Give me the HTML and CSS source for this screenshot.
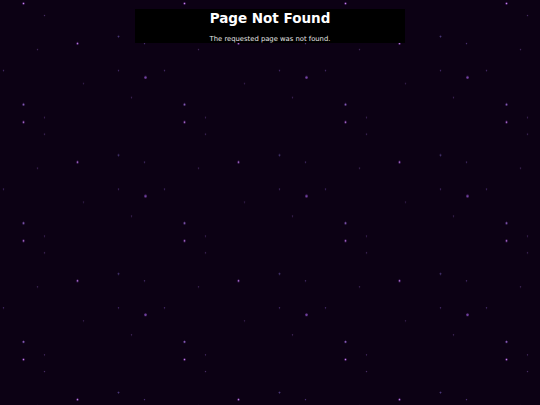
FILE: index.html
```html
<!DOCTYPE html>
<html>
<head>
<meta charset="utf-8">
<link rel="stylesheet" href="styles.css">
</head>
<body>
<div class="panel">
  <h1 class="title">Page Not Found</h1>
  <p class="message">The requested page was not found.</p>
</div>
</body>
</html>
```
FILE: styles.css
```css
html, body {
  margin: 0;
  padding: 0;
  height: 100%;
}
body {
  font-family: "DejaVu Sans", Verdana, sans-serif;
  background-color: #0c0114;
  background-image:
    radial-gradient(circle at 23.5px 3.5px, #c88ae8 0, #a066cc 0.5px, rgba(110,50,150,0.6) 1px, transparent 1.6px),
    radial-gradient(circle at 44.5px 15.5px, #4a2e66 0, rgba(70,40,100,0.6) 0.6px, transparent 1.1px),
    radial-gradient(circle at 77.5px 43.5px, #c88ae8 0, #a066cc 0.5px, rgba(110,50,150,0.6) 1px, transparent 1.6px),
    radial-gradient(circle at 37.5px 49.5px, #4a2e66 0, rgba(70,40,100,0.6) 0.6px, transparent 1.1px),
    radial-gradient(circle at 118.5px 36.5px, #4e3a80 0, rgba(80,60,130,0.6) 0.8px, transparent 1.3px),
    radial-gradient(circle at 144.5px 43.5px, #50367a 0, rgba(80,50,120,0.6) 0.6px, transparent 1.1px),
    radial-gradient(circle at 3.5px 70.5px, #4e3278 0, rgba(80,50,120,0.6) 0.6px, transparent 1.1px),
    radial-gradient(circle at 118.5px 70.5px, #4e3278 0, rgba(80,50,120,0.6) 0.6px, transparent 1.1px),
    radial-gradient(circle at 145.5px 77.5px, #7a48aa 0, #6a3c98 0.9px, rgba(100,50,140,0.5) 1.3px, transparent 1.8px),
    radial-gradient(circle at 83.5px 83.5px, #3e2658 0, rgba(60,36,90,0.6) 0.6px, transparent 1.1px),
    radial-gradient(circle at 131.5px 97.5px, #4a2e66 0, rgba(70,40,100,0.6) 0.6px, transparent 1.1px),
    radial-gradient(circle at 23.5px 104.5px, #9a70c8 0, #7a50aa 0.6px, rgba(100,60,150,0.5) 1.1px, transparent 1.6px),
    radial-gradient(circle at 44.5px 117.5px, #4a2e66 0, rgba(70,40,100,0.6) 0.6px, transparent 1.1px);
  background-size: 161px 118.7px;
  background-repeat: repeat;
}
.panel {
  width: 270px;
  margin: 0 auto;
  position: relative;
  top: 9px;
  background: #000;
  text-align: center;
  color: #fff;
  padding: 1px 0 0;
  box-sizing: border-box;
  height: 34px;
}
.title {
  margin: 0;
  font-size: 13.5px;
  font-weight: bold;
  line-height: 16px;
}
.message {
  margin: 9px 0 0;
  font-size: 6.8px;
  line-height: 8px;
  color: #e6e6e6;
}
```
